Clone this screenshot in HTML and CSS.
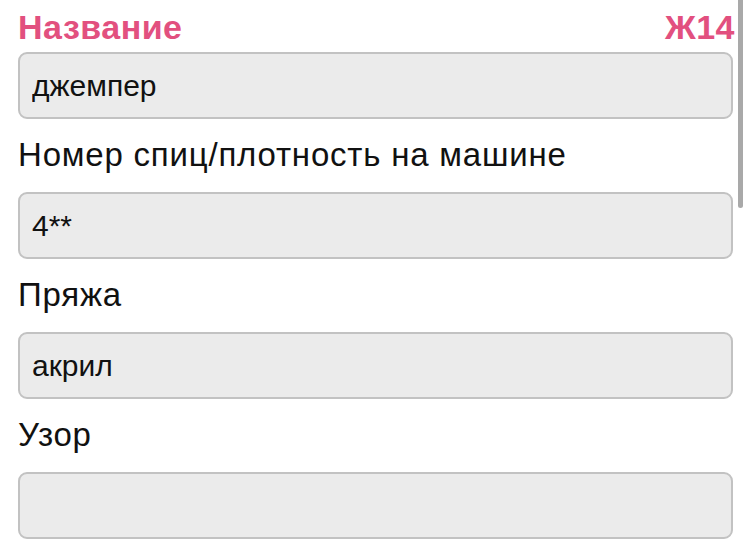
FILE: index.html
```html
<!DOCTYPE html>
<html lang="ru">
<head>
  <meta charset="UTF-8">
  <title>Изделие Ж14</title>
  <meta name="viewport" content="width=device-width, initial-scale=1.0">
  <link rel="stylesheet" href="styles.css">
</head>
<body>

<main class="form">
  <!-- Header row: title + item code -->
  <div class="title-row">
    <h1 class="title">Название</h1>
    <span class="code">Ж14</span>
  </div>
  <input class="field-input" type="text" value="джемпер">

  <div class="field">
    <label class="field-label" for="needles">Номер спиц/плотность на машине</label>
    <input class="field-input" id="needles" type="text" value="4**">
  </div>

  <div class="field">
    <label class="field-label" for="yarn">Пряжа</label>
    <input class="field-input" id="yarn" type="text" value="акрил">
  </div>

  <div class="field">
    <label class="field-label" for="pattern">Узор</label>
    <input class="field-input" id="pattern" type="text" value="">
  </div>
</main>

<!-- iOS style scroll indicator -->
<div class="scroll-thumb"></div>

</body>
</html>
```

FILE: styles.css
```css
* {
  box-sizing: border-box;
}
body {
  margin: 0;
  padding: 0;
  background-color: #ffffff;
  font-family: "Liberation Sans", Arial, sans-serif;
  color: #111111;
  overflow: hidden;
}

.form {
  display: flex;
  flex-direction: column;
  padding: 7px 17px 0 18px;
}

.title-row {
  display: flex;
  justify-content: space-between;
  align-items: baseline;
  margin-right: -2px;
  margin-bottom: 5px;
}
.title,
.code {
  margin: 0;
  font-size: 34px;
  line-height: 40px;
  letter-spacing: 0.5px;
  font-weight: bold;
  color: #e2507f;
}

.field {
  display: flex;
  flex-direction: column;
  margin-top: 16px;
}
.field-label {
  font-size: 33px;
  line-height: 40px;
  letter-spacing: 0.8px;
  margin-bottom: 17px;
}

.field-input {
  display: block;
  width: 100%;
  height: 67px;
  padding: 0 12px;
  border: 2px solid #c2c2c2;
  border-radius: 9px;
  background: #ebebeb;
  font-family: "Liberation Sans", Arial, sans-serif;
  font-size: 30px;
  color: #111111;
  outline: none;
}

.scroll-thumb {
  position: absolute;
  top: -6px;
  right: 7px;
  width: 5px;
  height: 214px;
  border-radius: 3px;
  background: #a9a9a9;
}
```
